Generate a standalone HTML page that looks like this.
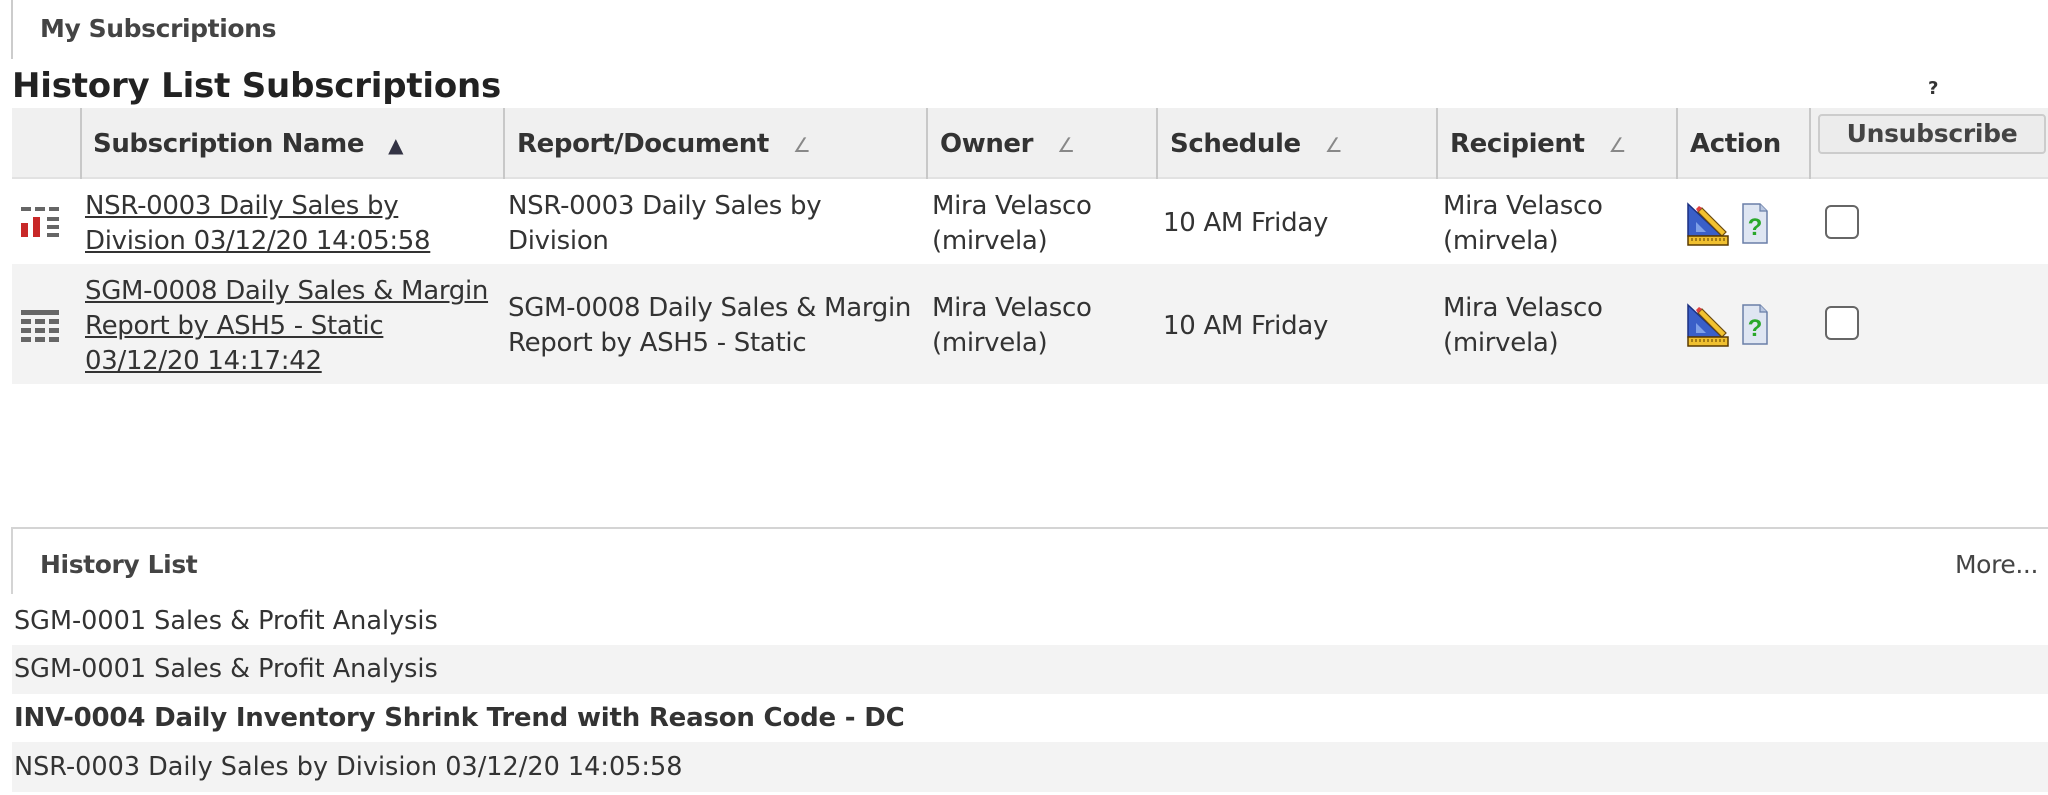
<!DOCTYPE html>
<html><head><meta charset="utf-8">
<style>
*{margin:0;padding:0;box-sizing:border-box}
body{width:2048px;height:795px;background:#fff;font-family:"DejaVu Sans","Liberation Sans",sans-serif;color:#333;position:relative;overflow:hidden}
.a{position:absolute;white-space:nowrap}
.b{font-weight:bold}
.hd{position:absolute;top:108px;height:71px;left:12px;width:2036px;background:#f0f0f0;border-bottom:2px solid #e2e2e2}
.sep{position:absolute;top:108px;height:71px;width:2px;background:#c8c8c8}
.ht{font-size:26px;font-weight:bold;color:#333;top:124px;line-height:40px;letter-spacing:-0.4px}
.tri{display:inline-block;margin-left:24px;color:#888;font-size:20px;font-weight:normal}
.c{font-size:26px;line-height:35px;color:#333;letter-spacing:-0.3px}
.u{text-decoration:underline}
.cb{position:absolute;width:34px;height:34px;border:2px solid #666;border-radius:6px;background:#fff}
.li{position:absolute;left:12px;width:2036px;font-size:25.5px;padding-left:2px;letter-spacing:0}
</style></head><body>
<div class="a" style="left:11px;top:0;width:2px;height:59px;background:#ccc"></div>
<div class="a b" style="left:40px;top:11px;line-height:36px;font-size:25px;color:#444;letter-spacing:-0.4px">My Subscriptions</div>
<div class="a b" style="left:12px;top:64px;line-height:44px;font-size:34px;color:#222;letter-spacing:-0.2px">History List Subscriptions</div>
<div class="a b" style="left:1928px;top:78px;font-size:18px;color:#333">?</div>

<div class="hd"></div>
<div class="sep" style="left:80px"></div>
<div class="sep" style="left:503px"></div>
<div class="sep" style="left:926px"></div>
<div class="sep" style="left:1156px"></div>
<div class="sep" style="left:1436px"></div>
<div class="sep" style="left:1676px"></div>
<div class="sep" style="left:1809px"></div>
<div class="a ht" style="left:93px">Subscription Name<span class="tri" style="color:#334">▲</span></div>
<div class="a ht" style="left:517px">Report/Document<span class="tri">∠</span></div>
<div class="a ht" style="left:940px">Owner<span class="tri">∠</span></div>
<div class="a ht" style="left:1170px">Schedule<span class="tri">∠</span></div>
<div class="a ht" style="left:1450px">Recipient<span class="tri">∠</span></div>
<div class="a ht" style="left:1690px">Action</div>
<div class="a b" style="left:1818px;top:114px;width:228px;height:40px;border:2px solid #ccc;border-radius:4px;background:#ececec;font-size:25px;text-align:center;line-height:36px;color:#444;letter-spacing:-0.3px">Unsubscribe</div>

<div class="a" style="left:12px;top:264px;width:2036px;height:120px;background:#f3f3f3"></div>

<svg class="a" style="left:21px;top:205px" width="40" height="36" viewBox="0 0 40 36">
<g fill="#666"><rect x="0" y="2" width="10" height="4"/><rect x="14" y="2" width="10" height="4"/><rect x="28" y="2" width="10" height="4"/>
<rect x="26" y="12" width="12" height="4"/><rect x="26" y="20" width="12" height="4"/><rect x="26" y="28" width="12" height="4"/></g>
<g fill="#c82828"><rect x="0" y="18" width="7" height="14"/><rect x="12" y="12" width="7" height="20"/></g></svg>
<svg class="a" style="left:21px;top:310px" width="40" height="34" viewBox="0 0 40 34">
<g fill="#666"><rect x="0" y="0" width="38" height="5"/>
<rect x="0" y="9" width="10" height="5"/><rect x="14" y="9" width="10" height="5"/><rect x="28" y="9" width="10" height="5"/>
<rect x="0" y="18" width="10" height="5"/><rect x="14" y="18" width="10" height="5"/><rect x="28" y="18" width="10" height="5"/>
<rect x="0" y="27" width="10" height="5"/><rect x="14" y="27" width="10" height="5"/><rect x="28" y="27" width="10" height="5"/></g></svg>

<div class="a c u" style="left:85px;top:189px">NSR-0003 Daily Sales by<br>Division 03/12/20 14:05:58</div>
<div class="a c" style="left:508px;top:189px">NSR-0003 Daily Sales by<br>Division</div>
<div class="a c" style="left:932px;top:189px">Mira Velasco<br>(mirvela)</div>
<div class="a c" style="left:1163px;top:206px">10 AM Friday</div>
<div class="a c" style="left:1443px;top:189px">Mira Velasco<br>(mirvela)</div>

<div class="a c u" style="left:85px;top:274px">SGM-0008 Daily Sales &amp; Margin<br>Report by ASH5 - Static<br>03/12/20 14:17:42</div>
<div class="a c" style="left:508px;top:291px">SGM-0008 Daily Sales &amp; Margin<br>Report by ASH5 - Static</div>
<div class="a c" style="left:932px;top:291px">Mira Velasco<br>(mirvela)</div>
<div class="a c" style="left:1163px;top:309px">10 AM Friday</div>
<div class="a c" style="left:1443px;top:291px">Mira Velasco<br>(mirvela)</div>

<svg class="a" style="left:1686px;top:202px" width="44" height="44" viewBox="0 0 44 44">
<path d="M2 2 L36 34 L2 34Z" fill="#3a5fc8" stroke="#1a2f80" stroke-width="1.5"/>
<path d="M10 20 L20 30 L10 30Z" fill="#7fa0e8"/>
<path d="M16 6 L40 30 L36 34 L12 10Z" fill="#f2c230" stroke="#6a4a10" stroke-width="1.2"/>
<path d="M12 10 L16 6 L13 4 L10 7Z" fill="#e04040"/>
<rect x="2" y="34" width="40" height="9" fill="#f0c030" stroke="#5a3a00" stroke-width="1.5"/>
<path d="M6 36v3M10 36v3M14 36v3M18 36v3M22 36v3M26 36v3M30 36v3M34 36v3M38 36v3" stroke="#5a3a00" stroke-width="1"/>
</svg>
<svg class="a" style="left:1742px;top:203px" width="26" height="41" viewBox="0 0 26 41">
<path d="M1 1 H18 L25 8 V40 H1Z" fill="#dfe6f2" stroke="#6a7fa8" stroke-width="1.5"/>
<path d="M18 1 V8 H25" fill="#b8c6e0" stroke="#6a7fa8" stroke-width="1.2"/>
<text x="13" y="32" font-size="24" font-weight="bold" fill="#2aa82a" text-anchor="middle" font-family="Liberation Sans">?</text>
</svg>
<svg class="a" style="left:1686px;top:303px" width="44" height="44" viewBox="0 0 44 44">
<path d="M2 2 L36 34 L2 34Z" fill="#3a5fc8" stroke="#1a2f80" stroke-width="1.5"/>
<path d="M10 20 L20 30 L10 30Z" fill="#7fa0e8"/>
<path d="M16 6 L40 30 L36 34 L12 10Z" fill="#f2c230" stroke="#6a4a10" stroke-width="1.2"/>
<path d="M12 10 L16 6 L13 4 L10 7Z" fill="#e04040"/>
<rect x="2" y="34" width="40" height="9" fill="#f0c030" stroke="#5a3a00" stroke-width="1.5"/>
<path d="M6 36v3M10 36v3M14 36v3M18 36v3M22 36v3M26 36v3M30 36v3M34 36v3M38 36v3" stroke="#5a3a00" stroke-width="1"/>
</svg>
<svg class="a" style="left:1742px;top:304px" width="26" height="41" viewBox="0 0 26 41">
<path d="M1 1 H18 L25 8 V40 H1Z" fill="#dfe6f2" stroke="#6a7fa8" stroke-width="1.5"/>
<path d="M18 1 V8 H25" fill="#b8c6e0" stroke="#6a7fa8" stroke-width="1.2"/>
<text x="13" y="32" font-size="24" font-weight="bold" fill="#2aa82a" text-anchor="middle" font-family="Liberation Sans">?</text>
</svg>
<div class="cb" style="left:1825px;top:205px"></div>
<div class="cb" style="left:1825px;top:306px"></div>

<div class="a" style="left:12px;top:527px;width:2036px;height:2px;background:#d4d4d4"></div>
<div class="a" style="left:11px;top:527px;width:2px;height:67px;background:#d4d4d4"></div>
<div class="a b" style="left:40px;top:547px;line-height:36px;font-size:25px;color:#444;letter-spacing:-0.4px">History List</div>
<div class="a" style="left:1955px;top:547px;line-height:36px;font-size:25px;color:#444;letter-spacing:-0.4px">More...</div>
<div class="li" style="top:598px;height:47px;line-height:47px">SGM-0001 Sales &amp; Profit Analysis</div>
<div class="li" style="top:645px;height:49px;line-height:49px;background:#f3f3f3">SGM-0001 Sales &amp; Profit Analysis</div>
<div class="li b" style="top:694px;height:48px;line-height:48px;font-size:26px;letter-spacing:-0.2px">INV-0004 Daily Inventory Shrink Trend with Reason Code - DC</div>
<div class="li" style="top:742px;height:50px;line-height:50px;background:#f3f3f3">NSR-0003 Daily Sales by Division 03/12/20 14:05:58</div>
</body></html>
